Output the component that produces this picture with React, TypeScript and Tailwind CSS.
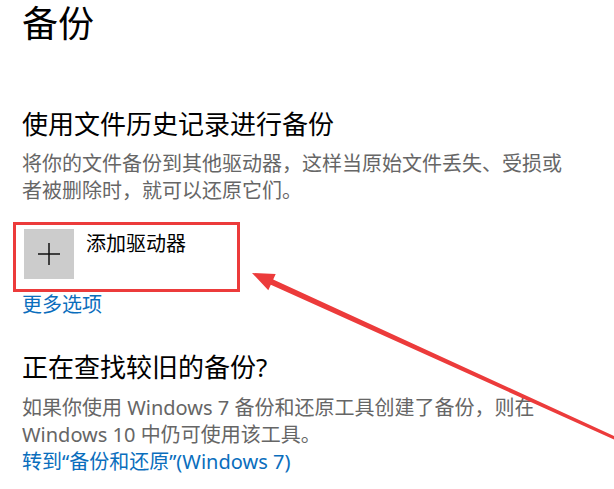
const FONT = { fontFamily: '"Noto Sans", "Noto Sans CJK SC", sans-serif' }

function Arrow() {
  // 标注箭头，从右下角指向红框
  return (
    <svg className="absolute left-0 top-0 pointer-events-none" width="614" height="489" viewBox="0 0 614 489">
      <polygon
        points="252,273 275.7,273.9 273.2,279.4 634.8,445.5 633.6,448.3 270.8,284.8 268.3,290.3"
        fill="#ec3b3b"
      />
    </svg>
  )
}

export default function App() {
  return (
    <div className="relative w-[614px] h-[489px] overflow-hidden bg-white pl-[22px] pt-[2px]" style={FONT}>
      <h1 className="text-[36px] leading-[43px] text-black font-normal">备份</h1>

      <h2 className="mt-[61px] text-[26px] leading-[36px] text-black font-normal">使用文件历史记录进行备份</h2>
      <p className="mt-[8px] text-[20px] leading-[27px] text-[#666666] whitespace-nowrap">
        将你的文件备份到其他驱动器，这样当原始文件丢失、受损或
        <br />
        者被删除时，就可以还原它们。
      </p>

      <div className="mt-[18px] -ml-[9px] w-[227px] h-[70px] border-[3px] border-[#ec3b3b] pl-[8px] pt-[4px]">
        <button type="button" className="flex items-start gap-[12px] text-left">
          <div className="w-[50px] h-[50px] bg-[#cccccc] flex items-center justify-center">
            <svg width="22" height="22" viewBox="0 0 22 22">
              <path d="M11 0v22M0 11h22" stroke="#111" strokeWidth="1.5" fill="none" />
            </svg>
          </div>
          <span className="mt-[1px] text-[20px] leading-[28px] text-black">添加驱动器</span>
        </button>
      </div>
      <a className="block -mt-[1px] text-[20px] leading-[28px] text-[#0a6ebd] w-fit">更多选项</a>

      <h2 className="mt-[30px] text-[26px] leading-[36px] text-black font-normal">正在查找较旧的备份?</h2>
      <p className="mt-[9px] text-[20px] leading-[27px] text-[#666666] whitespace-nowrap">
        如果你使用 Windows 7 备份和还原工具创建了备份，则在
        <br />
        Windows 10 中仍可使用该工具。
      </p>
      <a className="block text-[20px] leading-[27px] text-[#0a6ebd] w-fit">转到“备份和还原”(Windows 7)</a>

      <Arrow />
    </div>
  )
}
